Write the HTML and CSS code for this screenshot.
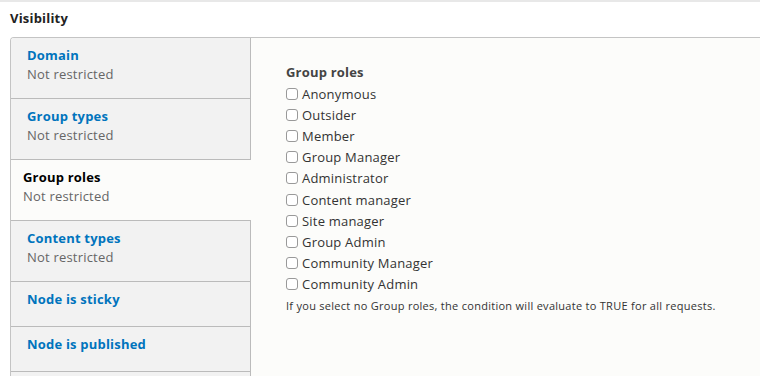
FILE: index.html
```html
<!DOCTYPE html>
<html lang="en">
  <head>
    <meta charset="UTF-8" />
    <meta name="viewport" content="width=device-width, initial-scale=1.0" />
    <title>Visibility</title>
    <link rel="stylesheet" href="styles.css">
  </head>
  <body>
    <h2 class="section-title">Visibility</h2>

    <div class="vtabs">
      <ul class="vtabs-menu">
        <li class="vtab">
          <a class="vtab-link" href="#">
            <strong class="vtab-title">Domain</strong>
            <span class="vtab-summary">Not restricted</span>
          </a>
        </li>
        <li class="vtab">
          <a class="vtab-link" href="#">
            <strong class="vtab-title">Group types</strong>
            <span class="vtab-summary">Not restricted</span>
          </a>
        </li>
        <li class="vtab selected">
          <a class="vtab-link" href="#">
            <strong class="vtab-title">Group roles</strong>
            <span class="vtab-summary">Not restricted</span>
          </a>
        </li>
        <li class="vtab">
          <a class="vtab-link" href="#">
            <strong class="vtab-title">Content types</strong>
            <span class="vtab-summary">Not restricted</span>
          </a>
        </li>
        <li class="vtab single">
          <a class="vtab-link" href="#">
            <strong class="vtab-title">Node is sticky</strong>
          </a>
        </li>
        <li class="vtab single">
          <a class="vtab-link" href="#">
            <strong class="vtab-title">Node is published</strong>
          </a>
        </li>
      </ul>

      <div class="vtabs-pane">
        <div class="form-label">Group roles</div>
        <div class="checkboxes">
          <label class="check"><input type="checkbox" /> Anonymous</label>
          <label class="check"><input type="checkbox" /> Outsider</label>
          <label class="check"><input type="checkbox" /> Member</label>
          <label class="check"><input type="checkbox" /> Group Manager</label>
          <label class="check"><input type="checkbox" /> Administrator</label>
          <label class="check"><input type="checkbox" /> Content manager</label>
          <label class="check"><input type="checkbox" /> Site manager</label>
          <label class="check"><input type="checkbox" /> Group Admin</label>
          <label class="check"><input type="checkbox" /> Community Manager</label>
          <label class="check"><input type="checkbox" /> Community Admin</label>
        </div>
        <div class="description">If you select no Group roles, the condition will evaluate to TRUE for all requests.</div>
      </div>
    </div>
  </body>
</html>
```

FILE: styles.css
```css
* {
  box-sizing: border-box;
}

body {
  margin: 0;
  background: #fff;
  border-top: 2px solid #e8e8e8;
  font-family: "Open Sans", "DejaVu Sans", sans-serif;
  font-size: 13px;
  letter-spacing: 0.2px;
  color: #333;
}

.section-title {
  margin: 0;
  padding: 6px 10px 0;
  height: 35px;
  line-height: 20px;
  font-size: 13px;
  font-weight: bold;
  color: #222;
}

.vtabs {
  display: flex;
  margin-left: 10px;
  border-top: 1px solid #c4c4c4;
  border-left: 1px solid #c4c4c4;
  border-top-left-radius: 4px;
  background: #fcfcfa;
  height: 339px;
  overflow: hidden;
}

/* tab list */
.vtabs-menu {
  list-style: none;
  margin: 0;
  padding: 0;
  width: 240px;
  flex-shrink: 0;
  background: #f2f2f2;
  border-right: 1px solid #bbb;
}

.vtab {
  background: #f2f2f2;
  border-bottom: 1px solid #bbb;
}

.vtab.selected {
  background: #fcfcfa;
  margin-right: -1px;
}

.vtab-link {
  display: block;
  padding: 8px 15px 14px 16px;
  text-decoration: none;
}

.vtab.single .vtab-link {
  padding-bottom: 18px;
}

.vtab-title {
  display: block;
  line-height: 18px;
  font-weight: bold;
  color: #0074bd;
}

.vtab-summary {
  display: block;
  line-height: 20px;
  color: #666;
}

.vtab.selected .vtab-link {
  padding-left: 12px;
}

.vtab.selected .vtab-title {
  color: #000;
}

/* pane */
.vtabs-pane {
  flex: 1;
  padding: 24px 35px;
}

.form-label {
  line-height: 20px;
  font-weight: bold;
  color: #444;
  margin-bottom: 1px;
}

.checkboxes {
  display: flex;
  flex-direction: column;
}

.check {
  display: flex;
  align-items: center;
  height: 21.2px;
  color: #333;
}

.check input {
  appearance: none;
  -webkit-appearance: none;
  width: 12px;
  height: 12px;
  margin: 0 4px 0 0;
  border: 1px solid #999;
  border-radius: 3px;
  background: #fff;
}

.description {
  margin-top: 3px;
  font-size: 11px;
  letter-spacing: 0.28px;
  line-height: 16px;
  color: #333;
}
```
